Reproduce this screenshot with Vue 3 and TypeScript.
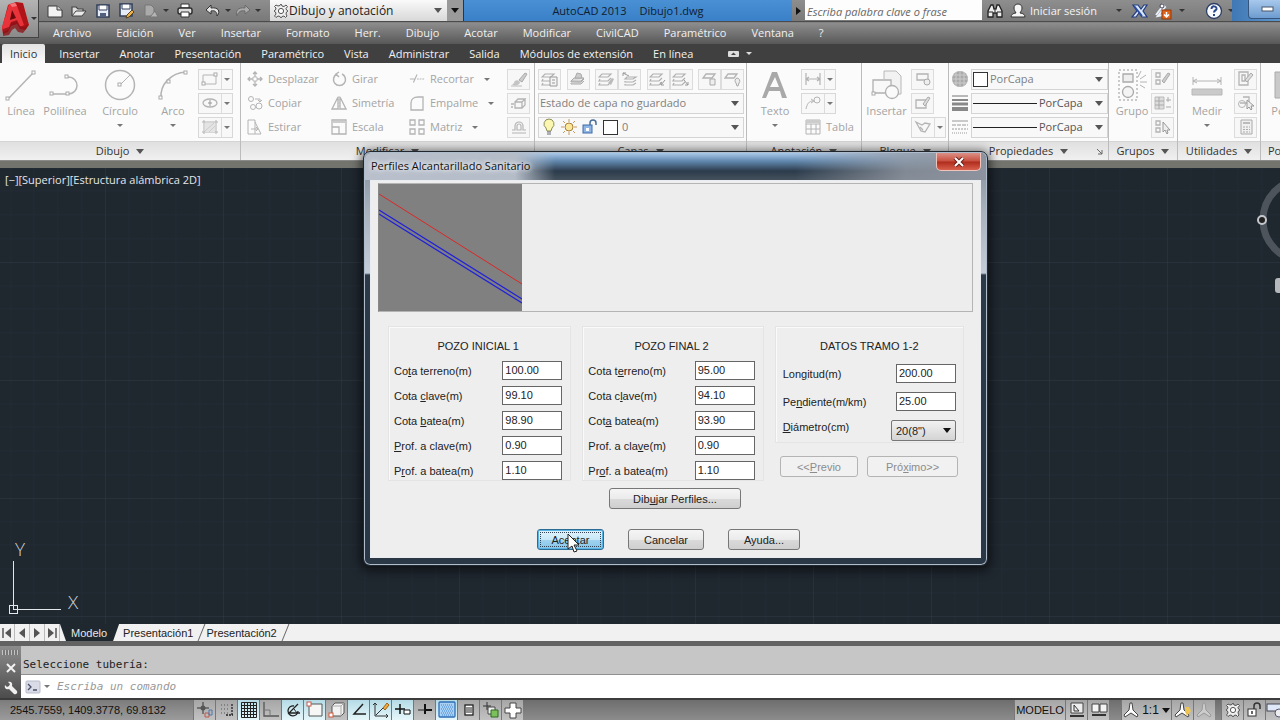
<script setup lang="ts">
import { h, ref } from 'vue'
import type { FunctionalComponent } from 'vue'

type Glyph = [number, number, string]

const G = 'fill="none" stroke="#b4b4b4"'
const D = 'fill="none" stroke="#222"'
const node = (x: number, y: number) =>
  `<rect x="${x}" y="${y}" width="3" height="3" fill="#fff" stroke="#aaa"/>`
const layers = '<path d="M4 3h9l-3 3H1zM2 8l-1 2h9l3-3M2 12l-1 2h9l3-3" fill="none" stroke="#b0b0b0" stroke-width="1.2"/>'

const glyphs: Record<string, Glyph> = {
  logo: [28, 34, '<path d="M6 3L14 0l7 1 6 22-4 5-5-1-3-5-6 2-3 6-5 2-1-6z" fill="#b01418"/><path d="M7 2l7-1 8 22-4 2-3-6-6 2-2 6-6 3-1-5z" fill="#e8333a"/><path d="M10 8l4 8-6 2z" fill="#6a0a0d"/><path d="M8 2l5-1 2 3-5 1z" fill="#f5767a"/><path d="M1 27l6-2 2-5 6-2 3 6 4 1 4-3-1 4-4 5-5-1-3-4-3 2-3 5-6 1z" fill="#8c1014" opacity=".75"/>'],
  newFile: [18, 16, '<path d="M2 3h9l5 4v7H2z" fill="#f2f2f2" stroke="#3c3c3c"/><path d="M11 3v4h5" fill="#ccc" stroke="#3c3c3c"/>'],
  open: [18, 16, '<path d="M2 13V4h4l2 2h5v2" fill="#ddd" stroke="#444" stroke-width="1.2"/><path d="M2 13l4-5h10l-4 5z" fill="#e8e8e8" stroke="#444"/>'],
  save: [16, 16, '<path d="M2 2h12v12H2z" fill="#e7edf7" stroke="#35425c" stroke-width="1.6"/><path d="M4 2h8v5H4z" fill="#fff" stroke="#35425c"/><path d="M5 10h6v4H5z" fill="#52607c"/>'],
  saveAs: [18, 16, '<path d="M2 1h12v12H2z" fill="#e7edf7" stroke="#35425c" stroke-width="1.6"/><path d="M4 1h8v5H4z" fill="#fff" stroke="#35425c"/><path d="M8 15l1-3 5-5 2 2-5 5z" fill="#f0b24a" stroke="#59411a"/>'],
  web: [18, 16, '<path d="M3 2h6l3 3v8H3z" fill="#aaa" stroke="#777"/><path d="M8 14l5-6 3 6z" fill="#b4b4b4" stroke="#777"/>'],
  print: [18, 16, '<path d="M5 1h8v4H5z" fill="#fff" stroke="#333"/><rect x="2" y="5" width="14" height="6" rx="2" fill="#ddd" stroke="#2c2c2c" stroke-width="1.4"/><path d="M5 9h8v5H5z" fill="#fff" stroke="#333"/>'],
  undo: [18, 16, '<path d="M7 2L2 7l5 4V8c4-1 6 1 6 5 4-5 1-9-6-8z" fill="#e4e4e4" stroke="#333"/>'],
  redo: [18, 16, '<path d="M11 2l5 5-5 4V8c-4-1-7 1-8 5-2-5 1-9 8-8z" fill="#aaa" stroke="#6a6a6a"/>'],
  gear: [16, 16, '<path d="M8 1l1 2 2 .5L13 2l1.500 1.500L13 5.500 13.500 7 15 8l-1.500 1-.5 2 1 2-1.500 1.500L11 13l-2 .5L8 15l-1-1.500L5 13l-2 1.500L1.500 13 3 11l-.5-2L1 8l1.500-1L3 5 1.500 3.500 3 2l2 1 2-.5z" fill="#eee" stroke="#555"/><circle cx="8" cy="8" r="2.600" fill="#fff" stroke="#555"/>'],
  binoculars: [18, 18, '<path d="M2 15V9l3-6h2l1 4h2l1-4h2l3 6v6h-5v-4H7v4z" fill="#eee" stroke="#222" stroke-width="1.300"/><path d="M2 10h5M11 10h5M8 9h2" stroke="#222"/>'],
  user: [18, 18, '<path d="M9 2c3 0 4 2 4 4s-1 3-2 5c3 0 5 2 5 4H2c0-2 2-4 5-4-1-2-2-3-2-5s1-4 4-4z" fill="#f5f5f5" stroke="#333"/>'],
  exchange: [18, 16, '<path d="M2 2h5l3 4 3-4h3l-4 6 4 6h-5l-3-4-3 4H1l5-6z" fill="#d8e6fa" stroke="#233c80" stroke-width="1.200"/><path d="M3 3l8 10" stroke="#2c4c9c" stroke-width="2"/>'],
  a360: [20, 18, '<path d="M8 2l3 3-7 9 5-1M2 13l6-8" fill="none" stroke="#e9eef8" stroke-width="2"/><circle cx="8" cy="4" r="2" fill="#fff" stroke="#445"/><rect x="8" y="8" width="9" height="9" fill="#e0651c" stroke="#8e3a0a"/><path d="M12.500 10v5M10 12.500l2.500 2.500 2.500-2.500" fill="none" stroke="#fff" stroke-width="1.500"/>'],
  help: [18, 18, '<circle cx="9" cy="9" r="7.500" fill="#f7f9fc" stroke="#2d3f66" stroke-width="1.300"/><path d="M6.500 7c0-4 5.500-3 5 0-.3 1.500-2.500 1.500-2.500 3.500M9 12v2" fill="none" stroke="#2a4788" stroke-width="2"/>'],
  minimize: [14, 8, '<rect x="1" y="2" width="11" height="4" fill="#fff" stroke="#47566b"/>'],
  media: [14, 8, '<rect x="1" y="1" width="11" height="6" rx="1" fill="#ddd"/><path d="M4 5l2.500-2.500L9 5z" fill="#444"/>'],
  line: [32, 32, `<path d="M4 29L28 4" ${G} stroke-width="1.500"/>${node(1, 28)}${node(27, 2)}`],
  polyline: [32, 32, `<path d="M3 25h16c12 0 12-17 0-17" ${G} stroke-width="1.500"/>${node(1, 23)}${node(17, 23)}${node(16, 6)}`],
  circle: [32, 32, `<circle cx="16" cy="16" r="14.500" ${G} stroke-width="1.500"/><path d="M16 16L26 6" ${G}/>${node(14, 14)}`],
  arc: [32, 32, `<path d="M4 29C3 15 14 4 29 3" ${G} stroke-width="1.500"/>${node(2, 27)}${node(10, 11)}${node(27, 2)}`],
  rect: [18, 16, `<path d="M2 4h13v9H2z" ${G}/>${node(1, 11)}${node(13, 2)}`],
  ellipse: [18, 16, `<ellipse cx="9" cy="8" rx="7" ry="4" ${G} stroke-width="1.300"/><path d="M9 5v6M7 8h4" stroke="#999"/>`],
  hatch: [18, 16, `<path d="M3 1v14M15 1v14M1 3h16M1 13h16" ${G}/><path d="M4 4h10v9H4z" fill="#e4e4e4"/><path d="M4 12l9-8M8 13l6-6" stroke="#ccc"/>`],
  move: [16, 16, `<path d="M8 1v14M1 8h14M6 3l2-2 2 2M6 13l2 2 2-2M3 6L1 8l2 2M13 6l2 2-2 2" ${G} stroke-width="1.300"/><path d="M6 6h4v4H6z" fill="#fff" stroke="#bbb"/>`],
  copy: [16, 16, `<circle cx="4" cy="4" r="2.500" ${G}/><circle cx="6" cy="12" r="2.500" ${G}/><circle cx="12" cy="11" r="3" ${G}/><path d="M8 4h5v3M11 5l2 2 2-2" ${G}/>`],
  stretch: [16, 16, `<path d="M1 1h7v14H1zM8 3l6 12H8" ${G}/><path d="M4 10h7M9 8l2 2-2 2" ${G}/>`],
  rotate: [16, 16, `<path d="M6 3a6 6 0 1 0 5 0M8 1L5 3l3 3" ${G} stroke-width="1.500"/>`],
  mirror: [16, 16, `<path d="M7 2v12H1zM9 2v12h6z" ${G} stroke-width="1.300"/><path d="M8 1v14" stroke="#bbb" stroke-dasharray="2 1"/>`],
  scale: [16, 16, `<path d="M1 1h14v14H1zM1 8h7v7H1z" ${G} stroke-width="1.300"/><path d="M1 3h14" stroke="#ccc" stroke-width="2"/>`],
  trim: [18, 16, `<path d="M1 8h5M9 8h2m1 0h2m1 0h2M5 12l4-9" ${G} stroke-width="1.300"/>`],
  fillet: [16, 16, `<path d="M2 15V8c0-4 3-6 7-6h5v13z" ${G} stroke-width="1.300"/>`],
  array: [16, 16, `<path d="M1 1h5v5H1zM10 1h5v5h-5zM1 10h5v5H1zM10 10h5v5h-5z" ${G} stroke-width="1.300"/>`],
  erase: [18, 16, '<path d="M9 9l6-7 2 1-5 8z" fill="#ccc" stroke="#aaa"/><path d="M4 12c0-3 4-4 6-1 0 3-4 4-8 3z" fill="#c4c4c4"/><path d="M1 15h11" stroke="#bbb"/>'],
  explode: [18, 16, `<path d="M5 7h7v6H5zM5 7l3-3h7l-3 3M15 4v6l-3 3M1 9h3M1 12h2" ${G} stroke-width="1.300"/>`],
  offset: [18, 16, `<path d="M2 14h14M2 11h3V7a4 4 0 0 1 8 0v4h3M7 11V7a2 2 0 0 1 4 0v4z" ${G} stroke-width="1.200"/>`],
  layerProps: [18, 16, `${layers}<path d="M9 6h7v9H9z" fill="#f4f4f4" stroke="#999"/><path d="M11 9h3M11 12h3" stroke="#999"/>`],
  layerStack: [18, 16, '<path d="M5 7h10l-3 3H2zM2 10l0 1h10l3-3M2 12l0 1h10l3-3" fill="#ddd" stroke="#aaa"/><path d="M6 7l2-5 4 1 1 4z" fill="#ccc" stroke="#aaa"/>'],
  layerMatch: [18, 16, `${layers}<path d="M10 12l4-5 2 1-3 6z" fill="#bbb"/>`],
  layerPrev: [18, 16, '<path d="M6 6h9l-3 2H4zM4 10l0 1h8l3-2M4 13l0 1h8l3-2" fill="none" stroke="#b0b0b0" stroke-width="1.200"/><path d="M8 5L2 2M2 2h3M2 2v3" stroke="#999"/>'],
  layerIso: [18, 16, `${layers}<path d="M16 9l-4 5M12 11v3h3" stroke="#999" fill="none"/>`],
  layerUniso: [18, 16, `${layers}<path d="M12 9l4 5M16 11v3h-3" stroke="#999" fill="none"/>`],
  layerFreeze: [18, 16, '<path d="M5 3h9l-3 4H2z" fill="none" stroke="#b4b4b4" stroke-width="1.300"/><path d="M9 8h5v6H9z" fill="#eee" stroke="#aaa"/>'],
  layerOff: [18, 16, '<path d="M4 3h9l-3 4H1z" fill="none" stroke="#b4b4b4" stroke-width="1.300"/><path d="M13 7a3 3 0 0 1 2 5l-1 3h-1l-1-3a3 3 0 0 1 1-5z" fill="#eee" stroke="#aaa"/>'],
  bulb: [14, 18, '<path d="M7 1a5 5 0 0 1 3 9l-1 3H5l-1-3a5 5 0 0 1 3-9z" fill="#fbf6b0" stroke="#8f8f5c"/><path d="M5 14h4M5 16h4" stroke="#667"/>'],
  sun: [16, 16, '<path d="M8 0v3M8 13v3M0 8h3M13 8h3M2 2l2 2M12 12l2 2M14 2l-2 2M4 12l-2 2" stroke="#c79a5c"/><circle cx="8" cy="8" r="4" fill="#fbe79a" stroke="#a97f3c"/>'],
  unlock: [16, 16, '<rect x="1" y="6" width="9" height="8" fill="#8fb4e6" stroke="#3c6ca8"/><path d="M8 6V4a3 3 0 0 1 6 0v2" fill="none" stroke="#4a6e9c" stroke-width="1.500"/><path d="M4 9h3v3H4z" fill="#fff"/>'],
  text: [28, 32, '<path d="M1 29L11 3h5l10 26h-5l-2-7H8l-3 7zM9 18h9L14 8z" fill="#a9a9a9"/>'],
  dim: [18, 16, `<path d="M2 2v12M16 2v12M2 8h14M5 6L2 8l3 2M13 6l3 2-3 2" ${G} stroke-width="1.200"/>`],
  leader: [18, 16, `<path d="M2 14C3 9 5 6 9 6M7 4l3 2-3 2" ${G}/><circle cx="13" cy="5" r="3" ${G}/>`],
  table: [16, 16, `<path d="M1 1h14v14H1zM1 5h14M1 10h14M6 5v10M11 5v10" ${G}/><path d="M1 1h14v3H1z" fill="#ccc"/>`],
  insert: [32, 32, `<path d="M13 10V2h12l5 5v18h-6" fill="#f2f2f2" stroke="#b8b8b8"/><path d="M2 11h18v13H2z" fill="#f8f8f8" stroke="#b0b0b0" stroke-width="1.300"/><circle cx="21" cy="23" r="6.500" fill="#fafafa" stroke="#b0b0b0" stroke-width="1.300"/>${node(1, 23)}`],
  block1: [18, 16, `<path d="M3 3h11v6H3z" ${G} stroke-width="1.300"/><circle cx="13" cy="11" r="3" fill="#eee" stroke="#aaa"/>`],
  block2: [18, 16, `<path d="M2 5h10v8H2z" ${G} stroke-width="1.300"/><path d="M9 9l5-7 2 1-5 8z" fill="#ddd" stroke="#aaa"/>`],
  block3: [18, 16, `<path d="M2 3l6 3 3-2 5 1-5 8-4-1zM6 8l3 3" ${G} stroke-width="1.300"/>`],
  sphere: [18, 18, '<circle cx="9" cy="9" r="8" fill="#aaa"/><path d="M2 5h14M1 9h16M2 13h14M5 2v14M9 1v16M13 2v14" stroke="#ccc"/>'],
  weights: [18, 18, '<path d="M1 2h16" stroke="#777"/><path d="M1 6h16" stroke="#888" stroke-width="2"/><path d="M1 10h16" stroke="#888" stroke-width="3"/><path d="M1 15h16" stroke="#888" stroke-width="4"/>'],
  dashes: [18, 16, '<path d="M1 2h16" stroke="#999"/><path d="M1 6h16" stroke="#999" stroke-dasharray="4 1"/><path d="M1 10h16" stroke="#999" stroke-dasharray="2 1"/><path d="M1 14h16" stroke="#999" stroke-dasharray="1 1"/>'],
  group: [32, 32, `<path d="M3 1h18v30H3z" fill="none" stroke="#999" stroke-dasharray="2 2"/><path d="M7 5h10v8H7z" fill="#eee" stroke="#aaa" stroke-width="1.300"/><circle cx="12" cy="23" r="5.500" fill="#f4f4f4" stroke="#aaa" stroke-width="1.300"/><path d="M22 8l3-6M24 10l6-4M24 13h7M24 16l5 3" ${G}/>`],
  group1: [18, 16, `<path d="M2 2h4v4H2zM2 9h4v4H2z" ${G} stroke-width="1.300"/><path d="M8 10l6-8 2 1-6 9z" fill="#ccc" stroke="#aaa"/>`],
  group2: [18, 16, `<path d="M1 2h9v12H1z" fill="#ddd" stroke="#bbb"/><path d="M5 2v12M1 6h9M1 10h9M12 5h5M14 2v5M12 12h5" stroke="#aaa"/>`],
  group3: [18, 16, `<path d="M2 2h4v4H2zM2 9h4v4H2z" ${G} stroke-width="1.300"/><path d="M9 3v10l2-2 2 4 1-1-1-3h3z" fill="#eee" stroke="#999"/>`],
  measure: [32, 32, '<path d="M2 8v8M30 8v8M2 12h28M6 10l-4 2 4 2M26 10l4 2-4 2" fill="none" stroke="#b4b4b4"/><path d="M1 20h30v6H1z" fill="#cacaca" stroke="#b8b8b8"/>'],
  util1: [18, 16, `<path d="M2 1h9v13H2zM5 4h3v6H5z" ${G} stroke-width="1.300"/><path d="M8 9l6-7 2 2-6 7z" fill="#ddd" stroke="#aaa"/>`],
  util2: [18, 16, `<path d="M6 2h6v6H3" ${G} stroke-width="1.300"/><circle cx="5" cy="9" r="3.500" ${G}/><path d="M10 5v9l2-2 2 3 1-1-1-3h3z" fill="#eee" stroke="#999"/>`],
  calc: [18, 16, '<path d="M4 1h11v14H4z" fill="#f0f0f0" stroke="#aaa"/><path d="M6 3h7v2H6z" fill="#bbb"/><path d="M6 8h7M6 10.500h7M6 13h7" stroke="#aaa" stroke-dasharray="2 1"/>'],
  paste: [24, 32, '<path d="M1 3h22v26H1z" fill="#c9c9c9" stroke="#aaa"/><path d="M10 10h13v19H10z" fill="#eee" stroke="#aaa"/>'],
  launcher: [8, 8, '<path d="M1 1l5 5M6 2v4H2" fill="none" stroke="#666"/>'],
  first: [12, 12, '<path d="M2 1v10" stroke="#555" stroke-width="1.500"/><path d="M10 1v10L4 6z" fill="#555"/>'],
  prev: [12, 12, '<path d="M9 1v10L3 6z" fill="#555"/>'],
  next: [12, 12, '<path d="M3 1v10l6-5z" fill="#555"/>'],
  last: [12, 12, '<path d="M10 1v10" stroke="#555" stroke-width="1.500"/><path d="M2 1v10l6-5z" fill="#555"/>'],
  close: [12, 12, '<path d="M2 2l8 8M10 2l-8 8" stroke="#f2f2f2" stroke-width="2"/>'],
  dialogClose: [12, 10, '<path d="M2 1l8 8M10 1L2 9" stroke="#6a2018" stroke-width="4"/><path d="M2 1l8 8M10 1L2 9" stroke="#fff" stroke-width="2"/>'],
  wrench: [14, 14, '<path d="M4 1l2 2-1 2-2 1-2-2c-1 3 1 5 4 4l5 5c2 1 4-1 3-3L8 5c1-3-1-5-4-4z" fill="#f0f0f0"/>'],
  prompt: [16, 14, '<rect x="1" y="1" width="14" height="12" rx="1" fill="#d9dbe6" stroke="#b9bccb"/><path d="M3 4l3 3-3 3M8 10h4" fill="none" stroke="#4a4f68" stroke-width="1.300"/>'],
  infer: [18, 18, '<path d="M7 1v12M1 7h12" stroke="#333"/><circle cx="7" cy="7" r="2.500" fill="#555"/><path d="M9 12h4v4H9z" fill="none" stroke="#bf5a4a"/><path d="M13 9h3v5h-3z" fill="none" stroke="#4a78b0"/>'],
  snap: [18, 18, '<path d="M3 4h9M3 8h9M3 12h9" stroke="#555" stroke-dasharray="1 2"/><path d="M14 3v11M8 14h7" stroke="#222" stroke-width="1.300" stroke-dasharray="2 1"/>'],
  grid: [18, 18, `<path d="M1.500 1.500h15v15h-15zM4.500 1v16M7.500 1v16M10.500 1v16M13.500 1v16M1 4.500h16M1 7.500h16M1 10.500h16M1 13.500h16" ${D}/>`],
  ortho: [18, 18, `<path d="M2 1v14h15" fill="none" stroke="#555" stroke-width="1.300"/><path d="M2 9h6v6" fill="none" stroke="#777"/>`],
  polar: [18, 18, `<path d="M14 3L5 12h11" ${D} stroke-width="1.300"/><path d="M10 5a5 5 0 1 0 4 5" ${D} stroke-width="1.300"/><path d="M10 8l3 4" ${D}/>`],
  osnap: [18, 18, '<path d="M3 3h13v12H3z" fill="#f6f6f6" stroke="#555"/><rect x="1" y="1" width="4" height="4" fill="#fff" stroke="#c75c4c"/>'],
  osnap3d: [18, 18, '<path d="M4 5l3-3h9v10l-3 3H4z" fill="#f2f2f2" stroke="#555"/><path d="M13 5l3-3M4 5h9v10" fill="none" stroke="#aaa"/><rect x="1" y="12" width="4" height="4" fill="#fff" stroke="#d45a3a"/>'],
  otrack: [18, 18, `<path d="M13 3L4 13h12" ${D} stroke-width="1.500"/>`],
  ducs: [18, 18, '<path d="M3 2v13h13M1 4l2-2 2 2M14 13l2 2-2 2M4 14l8-8" fill="none" stroke="#333"/><path d="M11 7l4-5 2 2-4 5z" fill="#f3a83a" stroke="#9c651c"/>'],
  dyn: [18, 18, '<path d="M6 3v10M1 8h10" stroke="#111" stroke-width="1.500"/><path d="M10 9h6v4h-6z" fill="#fff" stroke="#111"/>'],
  lwt: [18, 18, '<path d="M9 3v10" fill="none" stroke="#111" stroke-width="2"/><path d="M2 9h7" stroke="#222"/><path d="M9 9h7" stroke="#111" stroke-width="2"/>'],
  tpy: [18, 18, '<rect x="1" y="1" width="16" height="15" rx="1" fill="#a9d0f5" stroke="#2f6db4" stroke-width="1.300"/><path d="M3 4h12M4 6h12M3 8h12M4 10h12M3 12h12M4 14h12" stroke="#3f86d0" stroke-dasharray="1 1"/>'],
  qp: [18, 18, '<rect x="5" y="4" width="8" height="10" fill="#fff" stroke="#222" stroke-width="1.300"/><path d="M6 7h6M6 9h6M6 11h6" stroke="#222"/>'],
  sc: [18, 18, '<path d="M5 1v8M1 5h8" stroke="#333"/><path d="M6 6h7v7H6z" fill="#eee" stroke="#444"/><path d="M9 9h7v7H9z" fill="#7cc05c" stroke="#2f6a22"/>'],
  am: [18, 18, '<path d="M6 2h6v5h5v5h-5v5H6v-5H1V7h5z" fill="#fff" stroke="#444"/>'],
  modelSpace: [18, 18, '<path d="M3 2h12v10H3z" fill="#eee" stroke="#444"/><path d="M6 4v6h5z" fill="none" stroke="#333"/><path d="M2 15h14" stroke="#333" stroke-width="2"/>'],
  quickView: [18, 18, '<path d="M2 3h7v8H2zM10 3h7v8h-7z" fill="#f4f4f4" stroke="#444"/><path d="M2 14h14" stroke="#333" stroke-width="2"/>'],
  scaleA: [16, 18, '<path d="M7 2h2l1 7 5 5-1 2-6-4-6 4-1-2 5-5z" fill="#fff" stroke="#444"/>'],
  annoVis: [18, 18, '<path d="M7 2h2l1 7 5 5-1 2-6-4-6 4-1-2 5-5z" fill="#fff" stroke="#444"/><path d="M11 6h4l2 4-4 5-2-4z" fill="#f4c64a" opacity=".9"/>'],
  annoAuto: [18, 18, '<path d="M7 2h2l1 7 5 5-1 2-6-4-6 4-1-2 5-5z" fill="#ccc" stroke="#999"/>'],
  lock: [18, 18, '<rect x="2" y="8" width="8" height="7" fill="#fff" stroke="#333"/><path d="M8 8V5a3 3 0 0 1 6 0v3" fill="none" stroke="#333" stroke-width="1.500"/><path d="M6 10v3" stroke="#333" stroke-width="1.500"/>'],
  hardware: [18, 18, '<rect x="1" y="3" width="15" height="7" fill="#dfe8f6" stroke="#445"/><circle cx="13" cy="12" r="4" fill="#eee" stroke="#557"/>'],
}

const Icon: FunctionalComponent<{ name: string }> = ({ name }) => {
  const [w, ht, body] = glyphs[name]
  return h('svg', { class: 'icon', width: w, height: ht, viewBox: `0 0 ${w} ${ht}`, 'aria-hidden': 'true', innerHTML: body })
}
Icon.props = ['name']

const menus = ['Archivo', 'Edición', 'Ver', 'Insertar', 'Formato', 'Herr.', 'Dibujo', 'Acotar', 'Modificar', 'CivilCAD', 'Paramétrico', 'Ventana', '?']
const tabs = ['Inicio', 'Insertar', 'Anotar', 'Presentación', 'Paramétrico', 'Vista', 'Administrar', 'Salida', 'Módulos de extensión', 'En línea']

const drawTools = [
  { icon: 'line', label: 'Línea', caret: false },
  { icon: 'polyline', label: 'Polilínea', caret: false },
  { icon: 'circle', label: 'Círculo', caret: true },
  { icon: 'arc', label: 'Arco', caret: true },
]
const modifyTools = [
  { icon: 'move', label: 'Desplazar' }, { icon: 'rotate', label: 'Girar' }, { icon: 'trim', label: 'Recortar', caret: true },
  { icon: 'copy', label: 'Copiar' }, { icon: 'mirror', label: 'Simetría' }, { icon: 'fillet', label: 'Empalme', caret: true },
  { icon: 'stretch', label: 'Estirar' }, { icon: 'scale', label: 'Escala' }, { icon: 'array', label: 'Matriz', caret: true },
]
const layerTools = [['layerProps'], ['layerStack'], ['layerMatch', 'layerPrev'], ['layerIso', 'layerUniso'], ['layerFreeze', 'layerOff']]

interface Field { id: string; label: string; value: string }
const wells = ref<{ title: string; fields: Field[] }[]>([
  {
    title: 'POZO INICIAL 1',
    fields: [
      { id: 'i-terreno', label: 'Co&ta terreno(m)', value: '100.00' },
      { id: 'i-clave', label: 'Cota &clave(m)', value: '99.10' },
      { id: 'i-batea', label: 'Cota &batea(m)', value: '98.90' },
      { id: 'i-pclave', label: '&Prof. a clave(m)', value: '0.90' },
      { id: 'i-pbatea', label: 'P&rof. a batea(m)', value: '1.10' },
    ],
  },
  {
    title: 'POZO FINAL 2',
    fields: [
      { id: 'f-terreno', label: 'Cota t&erreno(m)', value: '95.00' },
      { id: 'f-clave', label: 'Cota c&lave(m)', value: '94.10' },
      { id: 'f-batea', label: 'Cot&a batea(m)', value: '93.90' },
      { id: 'f-pclave', label: 'Prof. a cla&ve(m)', value: '0.90' },
      { id: 'f-pbatea', label: 'Pr&of. a batea(m)', value: '1.10' },
    ],
  },
])
const section = ref<Field[]>([
  { id: 't-longitud', label: 'Lon&gitud(m)', value: '200.00' },
  { id: 't-pendiente', label: 'Pe&ndiente(m/km)', value: '25.00' },
])

// Splits "Co&ta" into the text before, the underlined access key and the rest.
function parts(s: string): [string, string, string] {
  const i = s.indexOf('&')
  return [s.slice(0, i), s.charAt(i + 1), s.slice(i + 2)]
}

const toggles = [
  { icon: 'infer', on: false }, { icon: 'snap', on: false }, { icon: 'grid', on: true }, { icon: 'ortho', on: false },
  { icon: 'polar', on: true }, { icon: 'osnap', on: true }, { icon: 'osnap3d', on: false }, { icon: 'otrack', on: true },
  { icon: 'ducs', on: true }, { icon: 'dyn', on: true }, { icon: 'lwt', on: false }, { icon: 'tpy', on: true },
  { icon: 'qp', on: false }, { icon: 'sc', on: false }, { icon: 'am', on: false },
]
</script>

<template>
  <div class="app">
    <header class="top">
      <button class="logo" aria-label="Menú de la aplicación"><Icon name="logo" /><i class="caret small dark"></i></button>
      <div class="quick">
        <div class="quick-tools">
          <button v-for="n in ['newFile', 'open', 'save', 'saveAs']" :key="n" class="qbtn" :aria-label="n"><Icon :name="n" /></button>
          <button class="qbtn" aria-label="Web"><Icon name="web" /></button><i class="caret small dark"></i>
          <button class="qbtn wide" aria-label="Trazar"><Icon name="print" /></button>
          <button class="qbtn" aria-label="Deshacer"><Icon name="undo" /></button><i class="caret small dark"></i>
          <button class="qbtn" aria-label="Rehacer"><Icon name="redo" /></button><i class="caret small dark"></i>
        </div>
        <div class="workspace">
          <Icon name="gear" />
          <select aria-label="Espacio de trabajo"><option>Dibujo y anotación</option></select>
          <i class="caret"></i>
        </div>
        <button class="more" aria-label="Personalizar"><i class="caret black"></i></button>
        <div class="title"><span>AutoCAD 2013</span><span>Dibujo1.dwg</span></div>
        <button class="expand" aria-label="Expandir"><i></i></button>
        <input class="search" type="search" aria-label="Buscar" placeholder="Escriba palabra clave o frase" />
        <div class="account">
          <Icon name="binoculars" /><Icon name="user" />
          <a href="#">Iniciar sesión</a><i class="caret small dark"></i>
          <Icon name="exchange" /><Icon name="a360" /><i class="caret small dark"></i>
          <Icon name="help" /><i class="caret small dark"></i>
        </div>
        <div class="winctl"><button aria-label="Minimizar"><Icon name="minimize" /></button></div>
      </div>
      <nav class="menubar"><a v-for="m in menus" :key="m" href="#">{{ m }}</a></nav>
    </header>

    <nav class="tabs">
      <button v-for="(t, i) in tabs" :key="t" :class="{ active: i === 0 }">{{ t }}</button>
      <span class="media"><Icon name="media" /><i class="caret small light"></i></span>
    </nav>

    <section class="ribbon">
      <div class="panel p-draw">
        <div class="body">
          <button v-for="t in drawTools" :key="t.label" class="big" :class="t.icon"><Icon :name="t.icon" />{{ t.label }}<i v-if="t.caret" class="caret small"></i></button>
          <div class="stack">
            <button v-for="n in ['rect', 'ellipse', 'hatch']" :key="n" class="split" :aria-label="n"><Icon :name="n" /><span><i class="caret small"></i></span></button>
          </div>
        </div>
        <div class="ptitle">Dibujo<i class="caret"></i></div>
      </div>

      <div class="panel p-modify">
        <div class="body">
          <div class="modgrid">
            <button v-for="t in modifyTools" :key="t.label" class="tool"><Icon :name="t.icon" /><span>{{ t.label }}</span><i v-if="t.caret" class="caret small"></i></button>
          </div>
          <div class="stack">
            <button v-for="n in ['erase', 'explode', 'offset']" :key="n" class="sq" :aria-label="n"><Icon :name="n" /></button>
          </div>
        </div>
        <div class="ptitle">Modificar<i class="caret"></i></div>
      </div>

      <div class="panel p-layers">
        <div class="body">
          <div class="rows">
            <div class="layer-tools">
              <span v-for="g in layerTools" :key="g[0]" class="join"><button v-for="n in g" :key="n" class="sq" :aria-label="n"><Icon :name="n" /></button></span>
            </div>
            <div class="combo"><select aria-label="Estado de capa"><option>Estado de capa no guardado</option></select><i class="caret"></i></div>
            <div class="combo layer">
              <Icon name="bulb" /><Icon name="sun" /><Icon name="unlock" /><b class="swatch"></b>
              <select aria-label="Capa"><option>0</option></select><i class="caret"></i>
            </div>
          </div>
        </div>
        <div class="ptitle">Capas<i class="caret"></i></div>
      </div>

      <div class="panel p-anno">
        <div class="body">
          <button class="big"><Icon name="text" />Texto<i class="caret small"></i></button>
          <div class="stack">
            <button v-for="n in ['dim', 'leader']" :key="n" class="split" :aria-label="n"><Icon :name="n" /><span><i class="caret small"></i></span></button>
            <button class="tool"><Icon name="table" /><span>Tabla</span></button>
          </div>
        </div>
        <div class="ptitle">Anotación<i class="caret"></i></div>
      </div>

      <div class="panel p-block">
        <div class="body">
          <button class="big"><Icon name="insert" />Insertar</button>
          <div class="stack">
            <button class="sq" aria-label="Crear"><Icon name="block1" /></button>
            <button class="sq" aria-label="Editar"><Icon name="block2" /></button>
            <button class="split" aria-label="Atributos"><Icon name="block3" /><span><i class="caret small"></i></span></button>
          </div>
        </div>
        <div class="ptitle">Bloque<i class="caret"></i></div>
      </div>

      <div class="panel p-props">
        <div class="body">
          <div class="rows props">
            <div class="prop"><Icon name="sphere" /><div class="combo"><b class="swatch"></b><select aria-label="Color"><option>PorCapa</option></select><i class="caret"></i></div></div>
            <div class="prop"><Icon name="weights" /><div class="combo ink"><b class="rule"></b><select aria-label="Grosor de línea"><option>PorCapa</option></select><i class="caret"></i></div></div>
            <div class="prop"><Icon name="dashes" /><div class="combo ink"><b class="rule"></b><select aria-label="Tipo de línea"><option>PorCapa</option></select><i class="caret"></i></div></div>
          </div>
        </div>
        <div class="ptitle">Propiedades<i class="caret"></i><Icon class="launcher" name="launcher" /></div>
      </div>

      <div class="panel p-groups">
        <div class="body">
          <button class="big"><Icon name="group" />Grupo</button>
          <div class="stack"><button v-for="n in ['group1', 'group2', 'group3']" :key="n" class="sq" :aria-label="n"><Icon :name="n" /></button></div>
        </div>
        <div class="ptitle">Grupos<i class="caret"></i></div>
      </div>

      <div class="panel p-utils">
        <div class="body">
          <button class="big"><Icon name="measure" />Medir<i class="caret small"></i></button>
          <div class="stack"><button v-for="n in ['util1', 'util2', 'calc']" :key="n" class="sq" :aria-label="n"><Icon :name="n" /></button></div>
        </div>
        <div class="ptitle">Utilidades<i class="caret"></i></div>
      </div>

      <div class="panel p-clip">
        <div class="body"><button class="big"><Icon name="paste" />Pegar</button></div>
        <div class="ptitle">Portapapeles</div>
      </div>
    </section>

    <main class="canvas">
      <svg class="mesh" aria-hidden="true">
        <defs>
          <pattern id="mesh" x="105" y="94" width="118" height="118" patternUnits="userSpaceOnUse">
            <path d="M24 0v118M47 0v118M71 0v118M95 0v118M0 24h118M0 47h118M0 71h118M0 95h118" stroke="#222b33" fill="none" />
            <path d="M0 0v118M0 0h118" stroke="#313c46" fill="none" />
          </pattern>
        </defs>
        <rect width="100%" height="100%" fill="url(#mesh)" />
      </svg>
      <div class="viewlabel">[−][Superior][Estructura alámbrica 2D]</div>
      <svg class="compass" width="24" height="120" viewBox="0 0 24 120" aria-hidden="true">
        <circle cx="48" cy="44" r="41" fill="none" stroke="#4d545b" stroke-width="7" />
        <circle cx="6" cy="44" r="4" fill="#222" stroke="#c4c8cc" stroke-width="2" />
        <rect x="19" y="102" width="10" height="15" rx="3" fill="#b4b8bc" />
      </svg>
      <svg class="ucs" width="80" height="80" viewBox="0 0 80 80">
        <path d="M9 22v48h48M5 66h8v8H5z" fill="none" stroke="#e4e7ea" stroke-width="1" shape-rendering="crispEdges" />
        <text x="11" y="17">Y</text><text x="64" y="70">X</text>
      </svg>
    </main>

    <nav class="sheets">
      <button v-for="n in ['first', 'prev', 'next', 'last']" :key="n" class="step" :aria-label="n"><Icon :name="n" /></button>
      <button class="sheet on"><span>Modelo</span></button>
      <button class="sheet"><span>Presentación1</span></button>
      <button class="sheet"><span>Presentación2</span></button>
    </nav>

    <section class="command">
      <div class="grip"><i></i><Icon name="close" /><Icon name="wrench" /></div>
      <div class="console">
        <div class="history">Seleccione tubería:</div>
        <label class="entry"><Icon name="prompt" /><i class="caret small"></i><input type="text" placeholder="Escriba un comando" aria-label="Comando" /></label>
      </div>
    </section>

    <footer class="status">
      <span class="coords">2545.7559, 1409.3778, 69.8132</span>
      <div class="toggles"><button v-for="t in toggles" :key="t.icon" :class="{ on: t.on }" :aria-label="t.icon"><Icon :name="t.icon" /></button></div>
      <div class="right">
        <button class="model">MODELO</button>
        <button aria-label="Espacio modelo"><Icon name="modelSpace" /></button>
        <button aria-label="Vista rápida"><Icon name="quickView" /></button>
        <span class="gap wide"></span>
        <button class="ratio"><Icon name="scaleA" />1:1<i class="caret black"></i></button>
        <button aria-label="Visibilidad"><Icon name="annoVis" /></button>
        <button aria-label="Automático"><Icon name="annoAuto" /></button>
        <span class="gap"></span>
        <button aria-label="Espacio"><Icon name="gear" /></button>
        <button aria-label="Bloqueo"><Icon name="lock" /></button>
        <button class="cut" aria-label="Hardware"><Icon name="hardware" /></button>
      </div>
    </footer>

    <div class="dialog" role="dialog" aria-labelledby="dlg-title">
      <div class="dlg-bar">
        <h1 id="dlg-title">Perfiles Alcantarillado Sanitario</h1>
        <button class="dlg-close" aria-label="Cerrar"><Icon name="dialogClose" /></button>
      </div>
      <form class="dlg-body" @submit.prevent>
        <div class="preview">
          <svg width="143" height="127" viewBox="0 0 143 127">
            <rect width="143" height="127" fill="#808080" />
            <path d="M0 10L143 100" stroke="#dc2626" />
            <path d="M0 26L143 115M0 30L143 119" stroke="#2222d8" stroke-width="1.300" />
          </svg>
        </div>
        <div class="groups">
          <fieldset v-for="w in wells" :key="w.title">
            <h2>{{ w.title }}</h2>
            <div v-for="f in w.fields" :key="f.id" class="field">
              <label :for="f.id">{{ parts(f.label)[0] }}<u>{{ parts(f.label)[1] }}</u>{{ parts(f.label)[2] }}</label>
              <input :id="f.id" v-model="f.value" type="text" />
            </div>
          </fieldset>
          <div class="side">
            <fieldset class="section">
              <h2>DATOS TRAMO 1-2</h2>
              <div v-for="f in section" :key="f.id" class="field">
                <label :for="f.id">{{ parts(f.label)[0] }}<u>{{ parts(f.label)[1] }}</u>{{ parts(f.label)[2] }}</label>
                <input :id="f.id" v-model="f.value" type="text" />
              </div>
              <div class="field diameter">
                <label for="t-diametro"><u>D</u>iámetro(cm)</label>
                <div class="drop"><select id="t-diametro"><option>20(8")</option></select><i class="caret black"></i></div>
              </div>
            </fieldset>
            <div class="pager">
              <button type="button" disabled>&lt;&lt;<u>P</u>revio</button>
              <button type="button" disabled>Pró<u>x</u>imo&gt;&gt;</button>
            </div>
          </div>
        </div>
        <button type="button" class="draw">Dib<u>u</u>jar Perfiles...</button>
        <div class="actions">
          <button type="submit" class="ok">Aceptar
            <svg class="pointer" width="13" height="20" viewBox="0 0 13 20" aria-hidden="true"><path d="M1 1v15l4-3 2 6 3-1-3-6h5z" fill="#fff" stroke="#222" /></svg>
          </button>
          <button type="button" class="cancel">Cancelar</button>
          <button type="button" class="help">Ayuda...</button>
        </div>
      </form>
    </div>
  </div>
</template>

<style>
html, body { background: #1f2830; }
</style>

<style scoped>
.app { position: relative; display: flex; flex-direction: column; min-height: 100vh; overflow: hidden; font: 11px/16px "Open Sans", "Noto Sans", sans-serif; color: #222; }
.app * { box-sizing: border-box; }
button, select, input { font: inherit; color: inherit; margin: 0; padding: 0; border: 0; background: none; border-radius: 0; }
button { display: flex; align-items: center; justify-content: center; white-space: nowrap; }
select { appearance: none; outline: none; }
a { color: inherit; text-decoration: none; }
.icon { display: block; flex: none; }
.caret { flex: none; width: 0; height: 0; border: 4px solid transparent; border-top: 5px solid #555; border-bottom: 0; }
.caret.small { border-width: 3px 3px 0; border-top-color: #777; }
.caret.black { border-top-color: #111; }
.caret.dark { border-top-color: #333; }
.caret.light { border-top-color: #ddd; }

.top { display: grid; grid-template-columns: 39px 1fr; grid-template-rows: 22px 22px; background: linear-gradient(#8e8e8e, #787878 22px, #8d8d8d 23px, #585858 44px); }
.logo { grid-row: span 2; margin-bottom: 6px; gap: 1px; align-items: center; background: linear-gradient(#b4b4b4, #8a8a8a); border-right: 1px solid #444; border-bottom: 1px solid #444; overflow: hidden; }
.quick { display: flex; align-items: stretch; min-width: 0; border-bottom: 1px solid #4b4b4b; }
.quick-tools { display: flex; align-items: center; width: 231px; padding-left: 4px; }
.qbtn { width: 24px; height: 20px; }
.qbtn.wide { width: 32px; }
.workspace { display: flex; align-items: center; width: 177px; padding: 0 5px 0 3px; background: linear-gradient(#fafafa, #d8d8d8); font-size: 12px; }
.workspace select { flex: 1; min-width: 0; }
.more { width: 17px; background: #9a9a9a; border-right: 1px solid #333; }
.title { flex: 1; display: flex; align-items: center; justify-content: center; gap: 13px; background: linear-gradient(#4a90d4, #3a80c8); color: #10202e; }
.expand { width: 13px; }
.expand i { border: 4px solid transparent; border-left: 5px solid #111; border-right: 0; }
.search { width: 177px; height: 20px; padding: 2px 2px 0; background: #fdfdfd; font-style: italic; }
.search::placeholder { color: #666; opacity: 1; }
.account { display: flex; align-items: center; width: 250px; padding-left: 4px; color: #f4f4f4; }
.account .icon { margin-right: 5px; }
.account .icon:nth-of-type(2) { margin-right: 3px; }
.account a { flex: none; width: 86px; white-space: nowrap; }
.account .caret { margin-right: 9px; }
.account .icon + .caret { margin-right: 20px; }
.winctl { width: 48px; padding-left: 16px; background: linear-gradient(90deg, #3f78b4, #5e96cf); }
.winctl button { width: 40px; height: 19px; background: linear-gradient(#a8c8ec, #6d9cd0); border: 1px solid #35557c; border-top: 0; border-radius: 0 0 0 4px; }
.menubar { display: flex; align-items: center; gap: 25px; padding-left: 14px; color: #f0f0f0; white-space: nowrap; }

.tabs { display: flex; align-items: stretch; height: 19px; background: #404040; color: #f2f2f2; padding-left: 2px; }
.tabs button { padding: 0 10px; }
.tabs .active { padding: 0 8px; margin-right: 4px; color: #333; background: linear-gradient(#e2e2e2, #fbfbfb); border-radius: 2px 2px 0 0; }
.media { display: flex; align-items: center; gap: 5px; margin-left: 24px; }

.ribbon { display: flex; height: 98px; overflow: hidden; background: #fbfbfb; border-bottom: 1px solid #8a8a8a; color: #a4a4a4; }
.panel { flex: none; display: flex; flex-direction: column; border-right: 1px solid #bcbcbc; }
.p-draw { width: 241px; } .p-modify { width: 294px; } .p-layers { width: 212px; } .p-anno { width: 115px; } .p-block { width: 87px; }
.p-props { width: 160px; } .p-groups { width: 69px; } .p-utils { width: 83px; } .p-clip { width: 100px; }
.body { flex: 1; display: flex; padding: 4px 2px 0; min-height: 0; overflow: hidden; }
.ptitle { position: relative; height: 19px; display: flex; align-items: center; justify-content: center; gap: 7px; background: linear-gradient(#e0e0e0, #f0f0f0); border-top: 1px solid #d4d4d4; color: #333; }
.p-clip .ptitle { justify-content: flex-start; padding-left: 7px; }
.launcher { position: absolute; right: 4px; top: 6px; }
.big { flex-direction: column; justify-content: flex-start; width: 46px; height: 72px; padding-top: 2px; line-height: 20px; }
.big .caret { margin-top: 3px; }
.big.line { width: 38px; } .big.polyline { width: 50px; } .big.circle { width: 60px; }
.p-draw .stack, .p-modify .stack { margin-left: 2px; }
.stack { display: grid; grid-template-rows: repeat(3, 24px); justify-items: start; align-items: center; }
.split { width: 35px; height: 21px; border: 1px solid #d8d8d8; background: #f8f8f8; }
.split .icon { margin: 0 2px; }
.split span { display: flex; align-items: center; justify-content: center; width: 11px; height: 100%; border-left: 1px solid #dcdcdc; }
.sq { width: 23px; height: 21px; border: 1px solid #dcdcdc; background: #f7f7f7; }
.modgrid { display: grid; grid-template: repeat(3, 24px) / 84px 78px 96px; padding-left: 4px; }
.tool { justify-content: flex-start; gap: 5px; }
.tool .icon { width: 16px; }
.tool .caret { margin-left: 5px; }
.rows { flex: 1; display: grid; grid-template-rows: repeat(3, 24px); align-items: center; }
.p-layers .rows { padding-left: 1px; }
.layer-tools { display: flex; justify-content: space-between; }
.join { display: flex; }
.combo { display: flex; align-items: center; gap: 4px; height: 21px; min-width: 0; padding: 0 4px 0 1px; border: 1px solid #d4d4d4; background: #f8f8f8; color: #808080; }
.combo select { flex: 1; min-width: 0; }
.combo.layer { padding-left: 3px; }
.combo.layer .icon { margin-right: 1px; }
.swatch { flex: none; width: 15px; height: 15px; background: #fff; border: 1px solid #333; }
.prop { display: grid; grid-template-columns: 18px 1fr; gap: 2px; align-items: center; }
.p-props .combo { margin-right: -2px; gap: 2px; }
.combo.ink { color: #555; }
.rule { width: 64px; height: 1px; background: #222; }
.p-anno .big, .p-block .big { margin-left: 1px; width: 50px; }
.p-anno .stack { margin-left: 1px; } .p-anno .tool { padding-left: 4px; }
.p-block .big { margin-left: -2px; }
.p-groups .big { width: 42px; margin-right: -2px; }
.p-utils .big { width: 54px; }

.canvas { position: relative; flex: 1; min-height: 300px; background: #1f272f; border-top: 7px solid #74746f; overflow: hidden; }
.mesh { position: absolute; inset: 0; width: 100%; height: 100%; }
.viewlabel { position: relative; padding: 4px 5px; color: #e4e6e8; }
.compass { position: absolute; right: 0; top: 8px; }
.ucs { position: absolute; left: 4px; bottom: 5px; }
.ucs text { font: 300 19px "Open Sans", sans-serif; fill: #c9cdd1; }

.sheets { display: flex; height: 22px; background: #f1f1f1; border-bottom: 5px solid #626262; font: 11px/16px "Liberation Sans", Arial, sans-serif; }
.step { width: 15px; border-right: 1px solid #bbb; }
.sheet { padding: 0 9px 0 4px; position: relative; }
.sheet::after { content: ""; position: absolute; right: 0; top: 0; bottom: 0; width: 1px; background: #666; transform: skewX(-22deg); }
.sheet.on { padding: 0 12px 0 11px; color: #e8e8e8; background: #1f272f; clip-path: polygon(0 0, 100% 0, calc(100% - 6px) 100%, 6px 100%); }

.command { display: flex; height: 52px; }
.grip { width: 21px; display: flex; flex-direction: column; align-items: center; justify-content: space-between; padding: 4px 2px 3px; background: linear-gradient(#8c8c8c, #4c4c4c); }
.grip i { width: 17px; height: 5px; background: repeating-linear-gradient(90deg, #c4c4c4 0 1px, #777 1px 3px); }
.console { flex: 1; display: flex; flex-direction: column; font: 11px/16px "DejaVu Sans Mono", monospace; }
.history { height: 29px; padding: 11px 2px 0; background: #c6c6c6; border-bottom: 1px solid #909090; }
.entry { flex: 1; display: flex; align-items: center; gap: 3px; padding-left: 4px; background: #fff; }
.entry input { flex: 1; margin-left: 4px; font-style: italic; outline: none; }
.entry input::placeholder { color: #999; opacity: 1; }

.status { display: flex; align-items: stretch; height: 22px; border-top: 2px solid #3c3c3c; background: linear-gradient(#6e6e6e, #8c8c8c); font: 11px/16px "Liberation Sans", Arial, sans-serif; color: #111; }
.coords { display: flex; align-items: center; width: 193px; padding: 0 0 0 10px; background: linear-gradient(#7c7c7c, #9b9b9b); }
.toggles, .right { display: flex; }
.status button { width: 22px; border-left: 1px solid #777; background: linear-gradient(#a6a6a6, #c2c2c2); }
.status .on { background: linear-gradient(#b4dbe6, #e6f7fb); }
.right { margin-left: auto; }
.status .model { width: 51px; }
.gap { width: 6px; } .gap.wide { width: 12px; }
.status .ratio { width: 50px; gap: 3px; font-size: 12px; }
.status .cut { width: 15px; justify-content: flex-start; overflow: hidden; }

.dialog { position: absolute; left: 50%; top: 151px; width: 625px; margin-left: -277px; padding: 0 6px 7px; border: 1px solid #20272f; border-radius: 7px; background: linear-gradient(#7f8c99 0, #a9b2bc 60px, #c4ccd8 121px, #2c3a48 123px, #2a3846 100%); box-shadow: inset 0 0 0 1px #aebccb, 0 2px 10px 3px rgba(0, 0, 0, .55); font: 11px/14px "Liberation Sans", Arial, sans-serif; color: #222; }
.dlg-bar { display: flex; align-items: flex-start; justify-content: space-between; height: 27px; margin: 1px -5px 0; padding: 0 5px 0 6px; border-radius: 6px 6px 0 0; background: linear-gradient(90deg, #b9c0cc 0, #b4bcc8 150px, rgba(180, 188, 200, 0) 190px, rgba(180, 188, 200, 0) 430px, rgba(150, 156, 166, .8) 540px, #8c939e 100%), linear-gradient(#a9c8ea, #6288ae 8px, #2c3c4c 18px, #44505c 27px); }
h1 { margin: 5px 0 0; font: 11px/16px "Open Sans", "Noto Sans", sans-serif; color: #111; text-shadow: 0 0 6px #fff, 0 0 4px #fff; }
.dlg-close { width: 45px; height: 18px; border: 1px solid #f0c4bc; border-top: 0; border-radius: 0 0 5px 5px; background: linear-gradient(#dc9086, #c85040 8px, #b02c1c 9px, #d8604c); }
.dlg-body { padding: 2px 7px 7px; border: 1px solid #e9edf2; background: #eee; }
.preview { border: 1px solid #b4b4b4; border-left-color: #888; background: #ededed; }
.preview svg { display: block; margin: 0; }
.groups { display: grid; grid-template-columns: 183fr 181fr 189fr; gap: 11px; margin: 14px 9px 0 10px; align-items: start; }
fieldset { margin: 0; padding: 12px 8px 0 5px; min-width: 0; border: 1px solid #e4e4e4; box-shadow: inset 1px 1px 0 #fafafa; }
h2 { margin: 0 0 8px; font: 11px/14px "Liberation Sans", Arial, sans-serif; text-align: center; }
.field { display: flex; align-items: center; justify-content: space-between; height: 19px; margin-bottom: 6px; }
.field:last-child { margin-bottom: 0; }
label { white-space: nowrap; }
.field input { width: 60px; height: 19px; padding: 0 2px 2px; background: #fff; border: 1px solid #666; }
.section { padding: 12px 7px 2px; }
.section h2 { margin-bottom: 11px; }
.section .field { margin-bottom: 9px; }
.section .diameter { height: 20px; margin-bottom: 0; align-items: flex-start; }
.drop { display: flex; align-items: center; width: 65px; height: 21px; padding: 0 4px; border: 1px solid #777; border-radius: 2px; background: linear-gradient(#f2f2f2, #d4d4d4); }
.drop select { flex: 1; min-width: 0; }
.pager { display: grid; grid-template-columns: 78fr 90fr; gap: 9px; margin: 13px 6px 0 5px; }
.dlg-body button { height: 21px; border: 1px solid #777; border-radius: 3px; background: linear-gradient(#f5f5f5, #ebebeb 50%, #dadada 51%, #cfcfcf); }
.dlg-body button:disabled { border-color: #b4b4b4; background: #f1f1f1; color: #8c8c8c; }
.dlg-body .draw { width: 132px; margin: 7px auto 0 231px; }
.actions { display: flex; gap: 24px; margin: 20px 0 0 159px; }
.dlg-body .ok { position: relative; width: 67px; border-color: #2f6c94; background: linear-gradient(#e4f4fc, #c8e8f8 50%, #a0d4f0 51%, #88c4e8); box-shadow: inset 0 0 0 1px #58b4e4; outline: 1px dotted #345; outline-offset: -4px; }
.dlg-body .cancel { width: 76px; }
.dlg-body .help { width: 72px; }
.pointer { position: absolute; left: 29px; top: 3px; pointer-events: none; }
</style>
